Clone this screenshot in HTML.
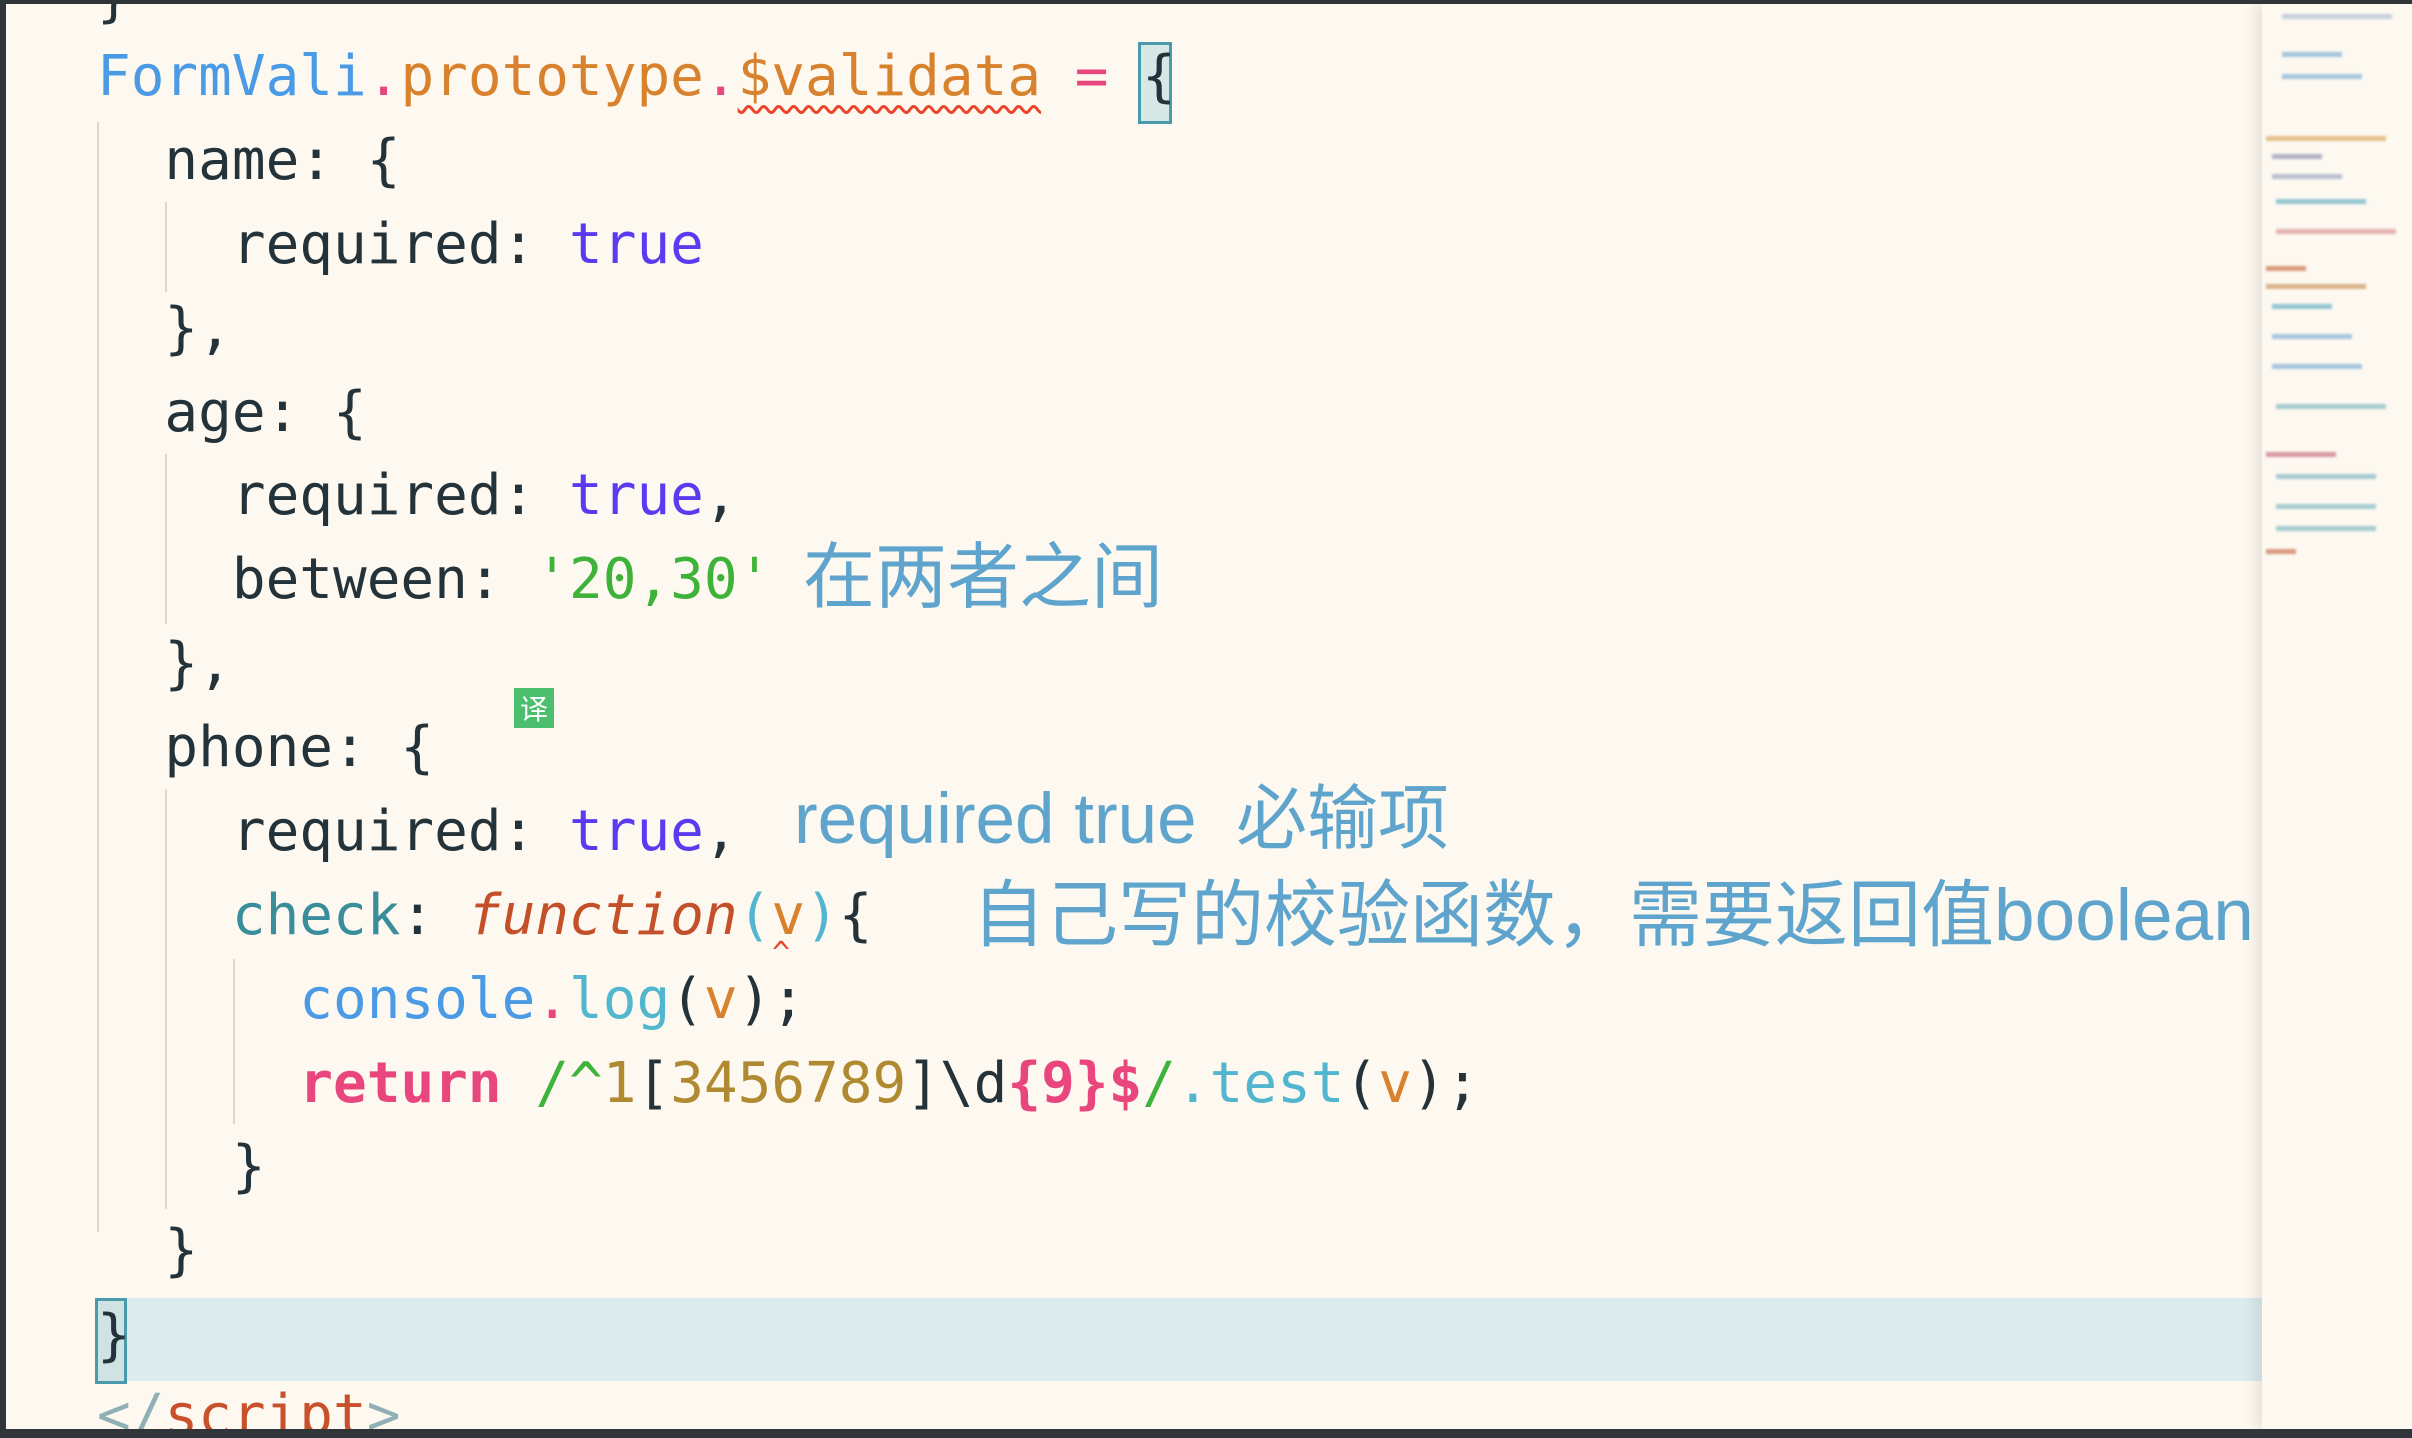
<!DOCTYPE html>
<html><head><meta charset="utf-8"><style>
html,body{margin:0;padding:0;}
body{width:2412px;height:1438px;background:#30353a;position:relative;overflow:hidden;}
#ed{position:absolute;left:6px;top:4px;width:2406px;height:1425px;background:#fdf9f1;overflow:hidden;}
.l{position:absolute;left:91px;height:84px;line-height:84px;font-family:"DejaVu Sans Mono","Liberation Mono",monospace;font-size:56px;white-space:pre;color:#24323a;}
.b{color:#4a9ae6}.o{color:#d9822e}.p{color:#e8467c}.t{color:#5a3cf0}.g{color:#3fb23a}.c{color:#3a8e9c}
.f{color:#c4502a;font-style:italic}.lg{color:#52b6cf}.r{color:#e8467c;font-weight:bold}.y{color:#b08a30}.v{color:#d9822e}
.cm{position:absolute;color:#5ea4cc;font-family:"Liberation Sans","Noto Sans CJK SC",sans-serif;white-space:pre;}
.guide{position:absolute;width:2px;background:#ddd8cf;}
.mm{position:absolute;height:5px;filter:blur(1.2px);opacity:.8}
</style></head><body>
<div id="ed">
<div style="position:absolute;left:89px;top:1294px;width:2167px;height:83px;background:#dcebee"></div>
<div style="position:absolute;left:89px;top:1294px;width:26px;height:80px;border:3px solid #4b9aab;background:#cfe3e5"></div>
<div style="position:absolute;left:1132px;top:38px;width:28px;height:76px;border:3px solid #4b9aab;background:#d6e8e6"></div>
<div class="guide" style="left:91px;top:118px;height:1110px"></div>
<div class="guide" style="left:159px;top:198px;height:90px"></div>
<div class="guide" style="left:159px;top:450px;height:170px"></div>
<div class="guide" style="left:159px;top:785px;height:420px"></div>
<div class="guide" style="left:227px;top:955px;height:165px"></div>

<div class="l" style="top:-49px">}</div>
<div class="l" style="top:31px"><span class="b">FormVali</span><span class="p">.</span><span class="o">prototype</span><span class="p">.</span><span class="o" style="text-decoration:underline wavy #e8452a;text-underline-offset:10px;text-decoration-thickness:3px">$validata</span> <span class="p">=</span> {</div>
<div class="l" style="top:115px">  name: {</div>
<div class="l" style="top:199px">    required: <span class="t">true</span></div>
<div class="l" style="top:283px">  },</div>
<div class="l" style="top:367px">  age: {</div>
<div class="l" style="top:450px">    required: <span class="t">true</span>,</div>
<div class="l" style="top:534px">    between: <span class="g">'20,30'</span></div>
<div class="cm" style="left:797px;top:524px;font-size:72px;line-height:100px">在两者之间</div>
<div class="l" style="top:618px">  },</div>
<div style="position:absolute;left:508px;top:684px;width:40px;height:40px;background:#4cbf6e;color:#fff;font:28px/40px 'Noto Sans CJK SC',sans-serif;text-align:center">译</div>
<div class="l" style="top:702px">  phone: {</div>
<div class="l" style="top:786px">    required: <span class="t">true</span>,</div>
<div class="cm" style="left:788px;top:766px;font-size:71px;line-height:100px">required true  必输项</div>
<div class="l" style="top:870px">    <span class="c">check</span>: <span class="f">function</span><span class="lg">(</span><span class="v">v</span><span class="lg">)</span>{</div>
<div style="position:absolute;left:766px;top:932px;color:#e8452a;font:30px 'DejaVu Sans Mono',monospace">^</div>
<div class="cm" style="left:966px;top:862px;font-size:73px;line-height:100px">自己写的校验函数，需要返回值boolean</div>
<div class="l" style="top:954px">      <span class="b">console</span><span class="p">.</span><span class="lg">log</span>(<span class="v">v</span>);</div>
<div class="l" style="top:1038px">      <span class="r">return</span> <span class="g">/^</span><span class="y">1</span>[<span class="y">3456789</span>]\d<span class="r">{9}$</span><span class="g">/</span><span class="lg">.test</span>(<span class="v">v</span>);</div>
<div class="l" style="top:1121px">    }</div>
<div class="l" style="top:1205px">  }</div>
<div class="l" style="top:1290px">}</div>
<div class="l" style="top:1370px"><span style="color:#8fb0b4">&lt;/</span><span style="color:#c8502a">script</span><span style="color:#8fb0b4">&gt;</span></div>

<div style="position:absolute;left:2256px;top:0;width:150px;height:1425px;background:#fdf9f1;box-shadow:-8px 0 12px rgba(0,0,0,.08)">
<div class="mm" style="left:20px;top:10px;width:110px;background:#b8c6d8"></div>
<div class="mm" style="left:20px;top:48px;width:60px;background:#8fb8d8"></div>
<div class="mm" style="left:20px;top:70px;width:80px;background:#8fb8d8"></div>
<div class="mm" style="left:4px;top:132px;width:120px;background:#e0b070"></div>
<div class="mm" style="left:10px;top:150px;width:50px;background:#a0a0b8"></div>
<div class="mm" style="left:10px;top:170px;width:70px;background:#a8b0c8"></div>
<div class="mm" style="left:14px;top:195px;width:90px;background:#7ab8c8"></div>
<div class="mm" style="left:14px;top:225px;width:120px;background:#e0a0a0"></div>
<div class="mm" style="left:4px;top:262px;width:40px;background:#d08060"></div>
<div class="mm" style="left:4px;top:280px;width:100px;background:#d0a070"></div>
<div class="mm" style="left:10px;top:300px;width:60px;background:#7ab8c8"></div>
<div class="mm" style="left:10px;top:330px;width:80px;background:#8fb8d8"></div>
<div class="mm" style="left:10px;top:360px;width:90px;background:#8fb8d8"></div>
<div class="mm" style="left:14px;top:400px;width:110px;background:#8fc0c8"></div>
<div class="mm" style="left:4px;top:448px;width:70px;background:#d08090"></div>
<div class="mm" style="left:14px;top:470px;width:100px;background:#8fc0c8"></div>
<div class="mm" style="left:14px;top:500px;width:100px;background:#8fc0c8"></div>
<div class="mm" style="left:14px;top:522px;width:100px;background:#8fc0c8"></div>
<div class="mm" style="left:4px;top:545px;width:30px;background:#d08060"></div>
</div>
</div>
</body></html>
